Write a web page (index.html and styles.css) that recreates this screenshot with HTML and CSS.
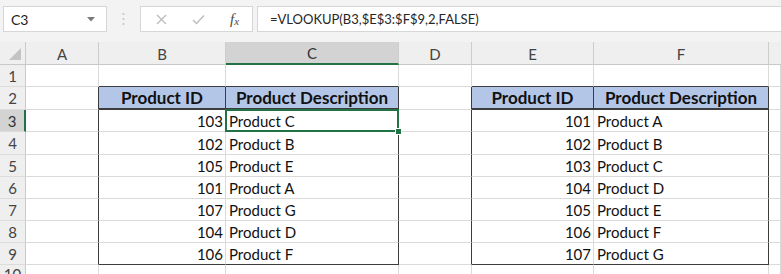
FILE: index.html
```html
<!DOCTYPE html>
<html>
<head>
<meta charset="utf-8">
<link rel="stylesheet" href="styles.css">
</head>
<body>
<div class="app">
  <div class="toolbar">
    <div class="namebox">
      <span class="nb-text">C3</span>
      <svg class="nb-arrow" width="8" height="5" viewBox="0 0 8 5"><path d="M0 0 L8 0 L4 4.5 Z" fill="#7a7a7a"/></svg>
    </div>
    <div class="sep">
      <svg width="3" height="14" viewBox="0 0 3 14"><circle cx="1.5" cy="2" r="1" fill="#c4c4c4"/><circle cx="1.5" cy="7" r="1" fill="#c4c4c4"/><circle cx="1.5" cy="12" r="1" fill="#c4c4c4"/></svg>
    </div>
    <div class="fxbox">
      <svg class="ic-x" width="11" height="11" viewBox="0 0 11 11"><path d="M1 1 L10 10 M10 1 L1 10" stroke="#bcbcbc" stroke-width="1.4" fill="none"/></svg>
      <svg class="ic-ok" width="13" height="11" viewBox="0 0 13 11"><path d="M1 6 L4.5 9.5 L12 1.5" stroke="#bcbcbc" stroke-width="1.4" fill="none"/></svg>
      <span class="ic-fx"><i>f</i><i class="fx-x">x</i></span>
    </div>
    <div class="formula">=VLOOKUP(B3,$E$3:$F$9,2,FALSE)</div>
  </div>

  <div class="sheet">
    <!-- column header row -->
    <div class="corner"><svg width="12" height="12" viewBox="0 0 12 12"><path d="M12 0 L12 12 L0 12 Z" fill="#c3c3c3"/></svg></div>
    <div class="ch">A</div>
    <div class="ch">B</div>
    <div class="ch ch-sel">C</div>
    <div class="ch">D</div>
    <div class="ch">E</div>
    <div class="ch">F</div>
    <div class="ch ch-last"></div>

    <!-- row 1 -->
    <div class="rh">1</div>
    <div class="c"></div>
    <div class="c top"></div>
    <div class="c top"></div>
    <div class="c"></div>
    <div class="c top"></div>
    <div class="c top"></div>
    <div class="c"></div>

    <!-- row 2 -->
    <div class="rh">2</div>
    <div class="c edge"></div>
    <div class="c th">Product ID</div>
    <div class="c th">Product Description</div>
    <div class="c edge"></div>
    <div class="c th">Product ID</div>
    <div class="c th">Product Description</div>
    <div class="c"></div>

    <!-- row 3 -->
    <div class="rh rh-sel">3</div>
    <div class="c edge"></div>
    <div class="c num">103</div>
    <div class="c txt right selcell">Product C<div class="sel"><div class="handle"></div></div></div>
    <div class="c edge"></div>
    <div class="c num">101</div>
    <div class="c txt right">Product A</div>
    <div class="c"></div>

    <!-- row 4 -->
    <div class="rh">4</div>
    <div class="c edge"></div>
    <div class="c num">102</div>
    <div class="c txt right">Product B</div>
    <div class="c edge"></div>
    <div class="c num">102</div>
    <div class="c txt right">Product B</div>
    <div class="c"></div>

    <!-- row 5 -->
    <div class="rh">5</div>
    <div class="c edge"></div>
    <div class="c num">105</div>
    <div class="c txt right">Product E</div>
    <div class="c edge"></div>
    <div class="c num">103</div>
    <div class="c txt right">Product C</div>
    <div class="c"></div>

    <!-- row 6 -->
    <div class="rh">6</div>
    <div class="c edge"></div>
    <div class="c num">101</div>
    <div class="c txt right">Product A</div>
    <div class="c edge"></div>
    <div class="c num">104</div>
    <div class="c txt right">Product D</div>
    <div class="c"></div>

    <!-- row 7 -->
    <div class="rh">7</div>
    <div class="c edge"></div>
    <div class="c num">107</div>
    <div class="c txt right">Product G</div>
    <div class="c edge"></div>
    <div class="c num">105</div>
    <div class="c txt right">Product E</div>
    <div class="c"></div>

    <!-- row 8 -->
    <div class="rh">8</div>
    <div class="c edge"></div>
    <div class="c num">104</div>
    <div class="c txt right">Product D</div>
    <div class="c edge"></div>
    <div class="c num">106</div>
    <div class="c txt right">Product F</div>
    <div class="c"></div>

    <!-- row 9 -->
    <div class="rh">9</div>
    <div class="c edge"></div>
    <div class="c num bottom">106</div>
    <div class="c txt right bottom">Product F</div>
    <div class="c edge"></div>
    <div class="c num bottom">107</div>
    <div class="c txt right bottom">Product G</div>
    <div class="c"></div>

    <!-- row 10 -->
    <div class="rh rh-cut">10</div>
    <div class="c"></div>
    <div class="c"></div>
    <div class="c"></div>
    <div class="c"></div>
    <div class="c"></div>
    <div class="c"></div>
    <div class="c"></div>
  </div>
</div>
</body>
</html>
```

FILE: styles.css
```css
* { box-sizing: border-box; }

html, body {
  margin: 0;
  padding: 0;
  background: #ffffff;
  overflow: hidden;
}

.app {
  width: 781px;
  height: 274px;
  overflow: hidden;
  font-family: Lato, "Liberation Sans", sans-serif;
  color: #000;
}

/* ---------- formula bar ---------- */
.toolbar {
  height: 42px;
  background: #f3f3f3;
  display: flex;
  align-items: flex-start;
  padding: 6px 0 0 3px;
}

.namebox {
  width: 104px;
  height: 26px;
  background: #fff;
  border: 1px solid #d6d6d6;
  display: flex;
  align-items: center;
  padding: 0 0 0 7px;
  font-size: 14px;
  color: #222;
}

.nb-text { flex: 1; }

.nb-arrow { margin-right: 11px; }

.sep {
  width: 33px;
  height: 26px;
  display: flex;
  align-items: center;
  justify-content: center;
  padding-right: 1px;
}

.fxbox {
  width: 113px;
  height: 26px;
  background: #fff;
  border: 1px solid #d6d6d6;
  display: flex;
  align-items: center;
  padding-left: 15px;
}

.ic-x { margin-right: 25px; }
.ic-ok { margin-right: 25px; }

.ic-fx {
  font-family: "Liberation Serif", "DejaVu Serif", serif;
  font-size: 15px;
  color: #4a4a4a;
  white-space: nowrap;
}
.ic-fx i { font-style: italic; }
.fx-x { font-size: 11px; position: relative; top: 1px; }

.formula {
  flex: 1;
  height: 26px;
  margin-left: 4px;
  background: #fff;
  border: 1px solid #d6d6d6;
  border-right: none;
  display: flex;
  align-items: center;
  padding-left: 12px;
  font-size: 13px;
  color: #262626;
}

/* ---------- sheet grid ---------- */
.sheet {
  display: grid;
  grid-template-columns: 26px 73px 127px 173px 73px 122px 175px 12px;
  grid-template-rows: 23px 22px 23px 22px 23px 22px 22px 22px 22px 22px 22px;
  font-size: 15px;
}

.corner {
  background: #efefef;
  border-right: 1px solid #c9c9c9;
  border-bottom: 1px solid #c9c9c9;
  display: flex;
  align-items: flex-end;
  justify-content: flex-end;
  padding: 0 4px 4px 0;
}

.ch {
  background: #efefef;
  border-right: 1px solid #cdcdcd;
  border-bottom: 1px solid #c9c9c9;
  display: flex;
  align-items: center;
  justify-content: center;
  color: #444;
  font-size: 15px;
  padding-top: 1px;
}

.ch-sel {
  background: #d3d3d3;
  border-bottom: 2px solid #217346;
  color: #333;
}

.ch-last { border-right: none; }

.rh {
  background: #efefef;
  border-right: 1px solid #c9c9c9;
  border-bottom: 1px solid #dcdcdc;
  display: flex;
  align-items: center;
  justify-content: center;
  color: #444;
  font-size: 15px;
}

.rh-cut {
  align-items: flex-start;
  padding-top: 1px;
  line-height: 16px;
}

.rh-sel {
  background: #d3d3d3;
  border-right: 2px solid #217346;
  color: #333;
}

.c {
  border-right: 1px solid #dadada;
  border-bottom: 1px solid #dadada;
  display: flex;
  align-items: center;
  padding: 1px 3px 0 3px;
  white-space: nowrap;
  color: #111;
}

.top { border-bottom: 1px solid #3c3c3c; }
.edge { border-right: 1px solid #3c3c3c; }
.bottom { border-bottom: 1px solid #3c3c3c; }
.right { border-right: 1px solid #3c3c3c; }

.th {
  background: #b4c6e7;
  font-weight: 700;
  font-size: 17px;
  justify-content: center;
  border-right: 1px solid #3c3c3c;
  border-bottom: 2px solid #3c3c3c;
  color: #111;
  padding-top: 0;
}

.num {
  justify-content: flex-end;
  padding-right: 2px;
}

.txt { padding-left: 3px; }

.selcell { position: relative; }

.sel {
  position: absolute;
  left: -1px;
  top: -1px;
  right: -1px;
  bottom: -1px;
  border: 2px solid #217346;
}

.handle {
  position: absolute;
  right: -5px;
  bottom: -5px;
  width: 7px;
  height: 7px;
  background: #217346;
  border: 1px solid #fff;
}
```
